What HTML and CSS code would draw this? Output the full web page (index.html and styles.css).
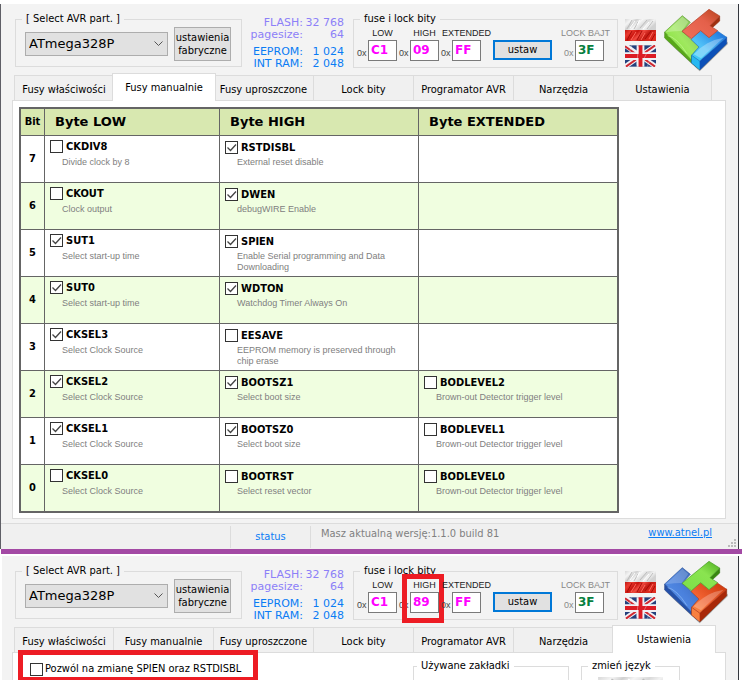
FILE: index.html
```html
<!DOCTYPE html>
<html lang="pl">
<head>
<meta charset="utf-8">
<title>AVR fuse bity</title>
<link rel="stylesheet" href="styles.css">
</head>
<body>
<svg class="defs" aria-hidden="true">
  <defs>
    <linearGradient id="silver" x1="0" y1="0" x2="1" y2="0.4">
      <stop offset="0" stop-color="#d8d8d8"/><stop offset="0.2" stop-color="#f4f4f4"/><stop offset="0.35" stop-color="#d0d0d0"/><stop offset="0.5" stop-color="#f6f6f6"/><stop offset="0.7" stop-color="#d9d9d9"/><stop offset="0.85" stop-color="#f2f2f2"/><stop offset="1" stop-color="#d2d2d2"/>
    </linearGradient>
    <linearGradient id="crimson" x1="0" y1="0" x2="1" y2="0.4">
      <stop offset="0" stop-color="#c01a14"/><stop offset="0.2" stop-color="#ea3a30"/><stop offset="0.4" stop-color="#c8140e"/><stop offset="0.55" stop-color="#f04a40"/><stop offset="0.75" stop-color="#c41c14"/><stop offset="1" stop-color="#e02c20"/>
    </linearGradient>
    <linearGradient id="green" x1="0" y1="1" x2="1" y2="0"><stop offset="0" stop-color="#7be02a"/><stop offset="0.5" stop-color="#a0e860"/><stop offset="1" stop-color="#7fb852"/></linearGradient>
    <linearGradient id="red" x1="0" y1="1" x2="1" y2="0"><stop offset="0" stop-color="#f0705c"/><stop offset="0.6" stop-color="#e4604a"/><stop offset="1" stop-color="#b8441c"/></linearGradient>
    <linearGradient id="blue" x1="0" y1="1" x2="1" y2="0"><stop offset="0" stop-color="#38d0f8"/><stop offset="0.4" stop-color="#50c0f8"/><stop offset="1" stop-color="#1668d8"/></linearGradient>
    <linearGradient id="navy" x1="0" y1="1" x2="1" y2="0"><stop offset="0" stop-color="#5c98f0"/><stop offset="0.5" stop-color="#4a80dc"/><stop offset="1" stop-color="#3462a8"/></linearGradient>
    <linearGradient id="lime" x1="0" y1="1" x2="1" y2="0"><stop offset="0" stop-color="#7ce048"/><stop offset="0.6" stop-color="#8ae450"/><stop offset="1" stop-color="#4fae20"/></linearGradient>
    <linearGradient id="orange" x1="0" y1="1" x2="1" y2="0"><stop offset="0" stop-color="#ff9048"/><stop offset="0.4" stop-color="#f06030"/><stop offset="1" stop-color="#c83408"/></linearGradient>
    <symbol id="flag-pl" viewBox="0 0 31 22">
      <rect width="31" height="11" fill="url(#silver)"/>
      <rect y="11" width="31" height="11" fill="url(#crimson)"/>
      <g fill="none" stroke-width="1">
        <path d="M2 10L7 1M9 10L13 3M15 9L22 1M22 10L28 2" stroke="#bdbdbd"/>
        <path d="M5 9L10 2M18 10L24 3M12 6L15 1" stroke="#fff"/>
        <path d="M2 21L7 12M12 21L17 12M20 20L26 12M26 22L30 15" stroke="#a80c08"/>
        <path d="M6 21L11 13M16 21L20 14M24 20L28 13" stroke="#ff6a5e"/>
      </g>
    </symbol>
    <symbol id="flag-uk" viewBox="0 0 32 22">
      <rect width="32" height="22" fill="#24407c"/>
      <path d="M0 0L32 22M32 0L0 22" stroke="#f0f0f4" stroke-width="5"/>
      <path d="M0 1L14 11M31 0L17 10M1 22L15 12M31 22L17 12" stroke="#d02830" stroke-width="2"/>
      <path d="M16 0V22M0 11H32" stroke="#f0f0f4" stroke-width="8"/>
      <path d="M16 0V22M0 11H32" stroke="#dc1c24" stroke-width="4"/>
      <path d="M7 0L4 8M26 14L23 22M14 2L12 20M22 9L20 13" stroke="#fff" stroke-opacity="0.35" stroke-width="1"/>
    </symbol>
  </defs>
</svg>

<section class="window first">
  <header class="top">
    <fieldset class="group part">
      <legend>[ Select AVR part. ]</legend>
      <div class="part-row">
        <select class="chip" aria-label="AVR part"><option>ATmega328P</option></select>
        <button class="factory" type="button">ustawienia fabryczne</button>
      </div>
    </fieldset>
    <dl class="memory">
      <dt class="soft">FLASH:</dt><dd class="soft">32 768</dd>
      <dt class="soft">pagesize:</dt><dd class="soft">64</dd>
      <dt class="gap">EEPROM:</dt><dd class="gap">1 024</dd>
      <dt>INT RAM:</dt><dd>2 048</dd>
    </dl>
    <fieldset class="group fuses">
      <legend>fuse i lock bity</legend>
      <div class="fuse-row">
        <div class="byte"><label for="low1">LOW</label><span class="hex">0x</span><input id="low1" value="C1"></div>
        <div class="byte"><label for="high1">HIGH</label><span class="hex">0x</span><input id="high1" value="09"></div>
        <div class="byte ext"><label for="ext1">EXTENDED</label><span class="hex">0x</span><input id="ext1" value="FF"></div>
        <button class="set" type="button">ustaw</button>
        <div class="byte lock"><label for="lock1">LOCK BAJT</label><span class="hex">0x</span><input id="lock1" value="3F"></div>
      </div>
    </fieldset>
    <div class="flags">
      <svg class="flag" role="img" aria-label="Polski"><use href="#flag-pl"/></svg>
      <svg class="flag" role="img" aria-label="English"><use href="#flag-uk"/></svg>
    </div>
    <svg class="logo" viewBox="130 20 198 195" aria-hidden="true">
      <path d="M138 118L240 213L324 132V124L240 204Z" fill="#555" fill-opacity="0.5"/>
      <g stroke-linejoin="round" stroke-width="2">
        <path d="M135 95V113L215 187L240 208V160L180 120Z" fill="#58a818" stroke="#4c8c20"/>
        <path d="M135 95L188 46L212 66L187 93L214 117L238 140L216 165V180Z" fill="url(#green)" stroke="#5c9c30"/>
        <path d="M216 165L240 182L321 110V130L241 208L216 188Z" fill="#0c50b8" stroke="#1448a0"/>
        <path d="M216 165L240 182V208L216 188Z" fill="#28b8f0"/>
        <path d="M214 117L243 91L268 112L293 92L321 111L240 182L216 165L238 140Z" fill="url(#blue)" stroke="#2878c8"/>
        <path d="M270 76L300 47V62L278 82Z" fill="#a03010" stroke="#903018"/>
        <path d="M187 93L268 27L300 47L271 76L294 91L268 112L243 91L215 115Z" fill="url(#red)" stroke="#b04028"/>
      </g>
      <path d="M138 96L188 49L206 65L186 92Q166 92 138 96Z" fill="#fff" fill-opacity="0.25"/>
      <path d="M144 106Q170 110 202 160" fill="none" stroke="#d8ffb0" stroke-width="3" stroke-opacity="0.5"/>
      <path d="M222 162Q260 120 312 112L244 174Z" fill="#fff" fill-opacity="0.3"/>
    </svg>
  </header>

  <nav class="tabs">
    <button type="button">Fusy właściwości</button>
    <button type="button" class="active">Fusy manualnie</button>
    <button type="button">Fusy uproszczone</button>
    <button type="button">Lock bity</button>
    <button type="button">Programator AVR</button>
    <button type="button">Narzędzia</button>
    <button type="button">Ustawienia</button>
  </nav>

  <main class="panel">
    <table class="bits">
      <colgroup><col class="c-bit"><col class="c-low"><col class="c-high"><col class="c-ext"></colgroup>
      <thead><tr><th class="bit">Bit</th><th>Byte LOW</th><th>Byte HIGH</th><th>Byte EXTENDED</th></tr></thead>
      <tbody>
        <tr><th class="bit">7</th>
          <td class="low"><label><input type="checkbox">CKDIV8</label><p>Divide clock by 8</p></td>
          <td><label><input type="checkbox" checked>RSTDISBL</label><p>External reset disable</p></td><td></td></tr>
        <tr><th class="bit">6</th>
          <td class="low"><label><input type="checkbox">CKOUT</label><p>Clock output</p></td>
          <td><label><input type="checkbox" checked>DWEN</label><p>debugWIRE Enable</p></td><td></td></tr>
        <tr><th class="bit">5</th>
          <td class="low"><label><input type="checkbox" checked>SUT1</label><p>Select start-up time</p></td>
          <td><label><input type="checkbox" checked>SPIEN</label><p>Enable Serial programming and Data Downloading</p></td><td></td></tr>
        <tr><th class="bit">4</th>
          <td class="low"><label><input type="checkbox" checked>SUT0</label><p>Select start-up time</p></td>
          <td><label><input type="checkbox" checked>WDTON</label><p>Watchdog Timer Always On</p></td><td></td></tr>
        <tr><th class="bit">3</th>
          <td class="low"><label><input type="checkbox" checked>CKSEL3</label><p>Select Clock Source</p></td>
          <td><label><input type="checkbox">EESAVE</label><p>EEPROM memory is preserved through chip erase</p></td><td></td></tr>
        <tr><th class="bit">2</th>
          <td class="low"><label><input type="checkbox" checked>CKSEL2</label><p>Select Clock Source</p></td>
          <td><label><input type="checkbox" checked>BOOTSZ1</label><p>Select boot size</p></td>
          <td><label><input type="checkbox">BODLEVEL2</label><p>Brown-out Detector trigger level</p></td></tr>
        <tr><th class="bit">1</th>
          <td class="low"><label><input type="checkbox" checked>CKSEL1</label><p>Select Clock Source</p></td>
          <td><label><input type="checkbox" checked>BOOTSZ0</label><p>Select boot size</p></td>
          <td><label><input type="checkbox">BODLEVEL1</label><p>Brown-out Detector trigger level</p></td></tr>
        <tr><th class="bit">0</th>
          <td class="low"><label><input type="checkbox">CKSEL0</label><p>Select Clock Source</p></td>
          <td><label><input type="checkbox">BOOTRST</label><p>Select reset vector</p></td>
          <td><label><input type="checkbox">BODLEVEL0</label><p>Brown-out Detector trigger level</p></td></tr>
      </tbody>
    </table>
  </main>

  <footer class="status">
    <span class="state">status</span>
    <span class="version">Masz aktualną wersję:1.1.0 build 81</span>
    <a href="#">www.atnel.pl</a>
    <svg class="grip" viewBox="0 0 8 8" aria-hidden="true"><path d="M6 0h2v2h-2zM3 3h2v2h-2zM6 3h2v2h-2zM0 6h2v2h-2zM3 6h2v2h-2zM6 6h2v2h-2z" fill="#bbb"/></svg>
  </footer>
</section>

<hr class="divider">

<section class="window second">
  <header class="top">
    <fieldset class="group part">
      <legend>[ Select AVR part. ]</legend>
      <div class="part-row">
        <select class="chip" aria-label="AVR part"><option>ATmega328P</option></select>
        <button class="factory" type="button">ustawienia fabryczne</button>
      </div>
    </fieldset>
    <dl class="memory">
      <dt class="soft">FLASH:</dt><dd class="soft">32 768</dd>
      <dt class="soft">pagesize:</dt><dd class="soft">64</dd>
      <dt class="gap">EEPROM:</dt><dd class="gap">1 024</dd>
      <dt>INT RAM:</dt><dd>2 048</dd>
    </dl>
    <fieldset class="group fuses">
      <legend>fuse i lock bity</legend>
      <div class="fuse-row">
        <div class="byte"><label for="low2">LOW</label><span class="hex">0x</span><input id="low2" value="C1"></div>
        <div class="byte marked"><label for="high2">HIGH</label><span class="hex">0x</span><input id="high2" value="89"></div>
        <div class="byte ext"><label for="ext2">EXTENDED</label><span class="hex">0x</span><input id="ext2" value="FF"></div>
        <button class="set" type="button">ustaw</button>
        <div class="byte lock"><label for="lock2">LOCK BAJT</label><span class="hex">0x</span><input id="lock2" value="3F"></div>
      </div>
    </fieldset>
    <div class="flags">
      <svg class="flag" role="img" aria-label="Polski"><use href="#flag-pl"/></svg>
      <svg class="flag" role="img" aria-label="English"><use href="#flag-uk"/></svg>
    </div>
    <svg class="logo" viewBox="130 20 198 195" aria-hidden="true">
      <path d="M138 118L240 213L324 132V124L240 204Z" fill="#555" fill-opacity="0.5"/>
      <g stroke-linejoin="round" stroke-width="2">
        <path d="M135 95V113L215 187L240 208V160L180 120Z" fill="#2450a8" stroke="#28488c"/>
        <path d="M135 95L188 46L212 66L187 93L214 117L238 140L216 165V180Z" fill="url(#navy)" stroke="#3058a0"/>
        <path d="M216 165L240 182L321 110V130L241 208L216 188Z" fill="#a82808" stroke="#902808"/>
        <path d="M216 165L240 182V208L216 188Z" fill="#f88040"/>
        <path d="M214 117L243 91L268 112L293 92L321 111L240 182L216 165L238 140Z" fill="url(#orange)" stroke="#b84020"/>
        <path d="M270 76L300 47V62L278 82Z" fill="#388810" stroke="#387818"/>
        <path d="M187 93L268 27L300 47L271 76L294 91L268 112L243 91L215 115Z" fill="url(#lime)" stroke="#489828"/>
      </g>
      <path d="M138 96L188 49L206 65L186 92Q166 92 138 96Z" fill="#fff" fill-opacity="0.2"/>
      <path d="M144 106Q170 110 202 160" fill="none" stroke="#a8d0ff" stroke-width="3" stroke-opacity="0.5"/>
      <path d="M222 162Q260 120 312 112L244 174Z" fill="#fff" fill-opacity="0.25"/>
    </svg>
  </header>

  <nav class="tabs">
    <button type="button">Fusy właściwości</button>
    <button type="button">Fusy manualnie</button>
    <button type="button">Fusy uproszczone</button>
    <button type="button">Lock bity</button>
    <button type="button">Programator AVR</button>
    <button type="button">Narzędzia</button>
    <button type="button" class="active">Ustawienia</button>
  </nav>

  <main class="panel settings">
    <label class="allow"><input type="checkbox">Pozwól na zmianę SPIEN oraz RSTDISBL</label>
    <fieldset class="group used"><legend>Używane zakładki</legend></fieldset>
    <fieldset class="group language"><legend>zmień język</legend>
      <svg class="big-flag" role="img" aria-label="Polski"><use href="#flag-pl"/></svg>
    </fieldset>
  </main>
</section>
</body>
</html>
```
FILE: styles.css
```css
*, ::before, ::after { box-sizing: border-box; }

body {
  margin: 0;
  height: 100vh;
  display: flex;
  flex-direction: column;
  overflow: hidden;
  background: #fff;
  color: #000;
  font: 11px/14px "DejaVu Sans Condensed", "DejaVu Sans", sans-serif;
}

button, input, select { font: inherit; color: inherit; margin: 0; border-radius: 0; }
.defs { position: absolute; width: 0; height: 0; }

.window {
  flex: none;
  margin: 4px 4px 0 0;
  border-right: 1px solid #33363d;
  background: #f3f3f3;
}
.first { border-left: 1px solid #5f5f66; }
.second { flex: 1; min-height: 0; overflow: hidden; margin-top: 2px; margin-left: 1px; border-left: 1px solid #fff; }
.second .top { padding-left: 13px; }
.second .tabs { margin-left: 12px; }
.second .panel { margin-left: 10px; }

.divider { flex: none; height: 5px; margin: 0 1px; border: 0; background: #a349a4; }

.top { display: flex; align-items: flex-start; padding: 8px 9px 0 14px; height: 69px; }

.group { margin: 0; padding: 0; min-width: 0; border: 1px solid #dcdcdc; }
.group legend { margin-left: 6px; padding: 0 4px; }
.part { flex: none; width: 227px; height: 55px; }
.part-row { display: flex; align-items: flex-start; gap: 6px; padding: 1px 9px 0; }
.chip {
  appearance: none;
  width: 143px;
  height: 24px;
  margin-top: 5px;
  padding: 0 3px;
  border: 1px solid #adadad;
  background: #e1e1e1 url("data:image/svg+xml,%3Csvg xmlns='http://www.w3.org/2000/svg' width='9' height='6'%3E%3Cpath d='M.5 .5L4.500 4.500L8.500 .5' fill='none' stroke='%23555'/%3E%3C/svg%3E") no-repeat right 4px center;
  font: 13px/20px "DejaVu Sans", sans-serif;
}
.factory { width: 57px; height: 34px; padding: 0; border: 1px solid #adadad; background: #e1e1e1; line-height: 13px; }

.memory {
  display: grid;
  grid-template: 12px 13px 16px 13px / 59px 41px;
  flex: none;
  width: 100px;
  margin: 5px 9px 0 2px;
  text-align: right;
  color: #0a7cf5;
  font: 11px/12px "DejaVu Sans", sans-serif;
}
.memory dt { white-space: nowrap; }
.memory dd { margin: 0; }
.memory .soft { color: #8c80f8; }
.memory .gap { padding-top: 4px; }

.fuses { flex: none; width: 265px; height: 56px; }
.fuse-row { display: flex; padding: 0 0 0 3px; }
.byte {
  position: relative;
  flex: none;
  display: grid;
  grid-template: 14px 21px / 11px 29px;
  width: 42px;
  font-family: "Liberation Sans", sans-serif;
}
.byte label { grid-column: 1 / 3; justify-self: end; width: 29px; display: flex; justify-content: center; white-space: nowrap; font-size: 9px; color: #222; }
.byte .hex { font-size: 9px; line-height: 27px; color: #444; }
.byte input {
  width: 29px;
  height: 21px;
  padding: 0 0 2px 2px;
  border: 1px solid #7a7a7a;
  background: #fff;
  color: #f0f;
  font: bold 12px/16px "DejaVu Sans", sans-serif;
}
.ext { width: 52px; }
.set { width: 59px; height: 20px; margin: 14px 12px 0 0; padding: 0; border: 2px solid #0078d7; background: #e1e1e1; line-height: 14px; }
.lock label, .lock .hex { color: #888; }
.lock label { width: 37px; }
.lock input { color: #078040; }
.marked::after { content: ""; position: absolute; left: 3px; top: -4px; width: 42px; height: 49px; border: 5px solid #ed1c24; }

.flags { display: grid; gap: 4px; margin: 7px 7px 0; }
.flag { display: block; width: 31px; height: 22px; }
.logo { flex: none; width: 66px; height: 65px; margin-top: -5px; }

.tabs { display: flex; align-items: flex-end; height: 28px; margin: 0 12px 0 13px; position: relative; }
.tabs button {
  flex: 0 0 100px;
  height: 26px;
  padding: 3px 0 0;
  border: 1px solid #dcdcdc;
  border-left-width: 0;
  background: #f0f0f0;
  white-space: nowrap;
}
.tabs button:first-child { border-left-width: 1px; }
.tabs button:last-child { flex-basis: 98px; }
.tabs .active { height: 28px; margin: 0 -2px; flex-basis: 104px; border-left-width: 1px; border-bottom: 0; background: #fff; padding: 0; z-index: 1; }
.tabs .active:last-child { flex-basis: 104px; }

.panel { margin: -1px 12px 0 11px; padding: 6px; border: 1px solid #dcdcdc; background: #fff; height: 419px; }

.bits { border-collapse: separate; border-spacing: 0; table-layout: fixed; width: 600px; border: 2px solid #656565; }
.c-bit { width: 24px; }
.c-low { width: 175px; }
.c-high { width: 199px; }
.bits th, .bits td { padding: 0; border: 0 solid #656565; border-right-width: 1px; border-bottom-width: 1px; }
.bits tr > :last-child { border-right-width: 0; }
.bits thead th { height: 27px; padding-left: 10px; background: #d8e8b0; text-align: left; font: bold 13px/20px "DejaVu Sans", sans-serif; }
.bits thead .bit, .bits .bit { padding: 0; text-align: center; font: bold 11px/14px "DejaVu Sans Condensed", sans-serif; }
.bits td { height: 47px; padding: 5px 5px 0; vertical-align: top; }
.bits .low { padding-top: 4px; }
.bits tbody tr:last-child > * { height: 46px; border-bottom-width: 0; }
.bits tbody tr:nth-child(even) { background: #f0fee0; }
.bits label { display: flex; align-items: center; gap: 3px; height: 13px; font-weight: bold; }
.bits p { margin: 3px 8px 0 12px; color: #808080; font: 9px/11px "Liberation Sans", sans-serif; }
.bits .low p { margin-top: 4px; }

input[type="checkbox"] { appearance: none; flex: none; width: 13px; height: 13px; border: 1px solid #333; background: #fff; }
input[type="checkbox"]:checked {
  background: #fff url("data:image/svg+xml,%3Csvg xmlns='http://www.w3.org/2000/svg' width='11' height='11'%3E%3Cpath d='M1.500 5.500L4.500 8.500L10 2.500' fill='none' stroke='%23444' stroke-width='1.300'/%3E%3C/svg%3E") center no-repeat;
}

.status { display: flex; align-items: stretch; height: 26px; margin-top: 4px; border-top: 1px solid #dcdcdc; background: #f0f0f0; padding-left: 229px; }
.state { width: 81px; margin: 2px 0 1px; border: 1px solid #dcdcdc; border-width: 0 1px; text-align: center; line-height: 22px; color: #0a7cf5; }
.version { flex: 1; padding-left: 10px; line-height: 20px; color: #808080; }
.status a { line-height: 18px; color: #0a7cf5; }
.grip { width: 8px; height: 8px; margin: 15px 2px 0 16px; }

.settings { display: flex; align-items: flex-start; padding: 6px 45px 0 17px; position: relative; }
.allow { position: relative; display: flex; align-items: center; gap: 2px; margin-top: 3px; white-space: nowrap; }
.allow::after { content: ""; position: absolute; left: -12px; top: -12px; width: 240px; height: 32px; border: 5px solid #ed1c24; }
.used { width: 156px; height: 120px; margin-left: auto; }
.group.used legend { margin-left: 3px; }
.language { width: 99px; height: 120px; margin-left: 12px; }
.big-flag { display: block; width: 65px; height: 46px; margin: 4px auto 0; }
```
